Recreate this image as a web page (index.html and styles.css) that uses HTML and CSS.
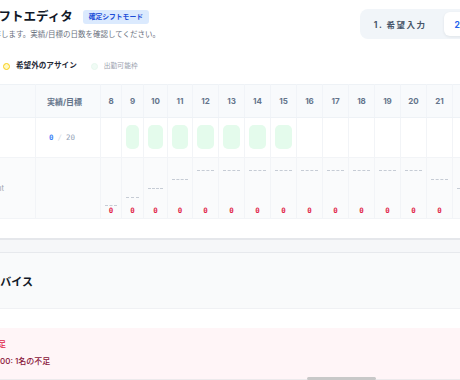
FILE: index.html
```html
<!DOCTYPE html>
<html lang="ja">
<head>
  <meta charset="UTF-8">
  <meta name="viewport" content="width=device-width, initial-scale=1.0">
  <title>シフトエディタ</title>
  <link rel="stylesheet" href="styles.css">
</head>
<body>
  <div class="page">
    <section class="editor">
      <div class="editor-head">
        <div class="title-block">
          <div class="title-row">
            <h1>シフトエディタ</h1>
            <span class="badge">確定シフトモード</span>
          </div>
          <p class="subtitle">保存します。実績/目標の日数を確認してください。</p>
        </div>
        <div class="steps">
          <button class="step">1. 希望入力</button>
          <button class="step active">2. 確定シフト</button>
        </div>
      </div>

      <div class="legend">
        <span class="legend-item"><span class="dot dot-warn"></span>希望外のアサイン</span>
        <span class="legend-item muted"><span class="dot dot-ok"></span>出勤可能枠</span>
      </div>

      <div class="grid-wrap">
        <table class="shift-table">
          <colgroup>
            <col style="width:75px">
            <col style="width:65px">
            <col style="width:21px">
            <col style="width:22px">
            <col style="width:24px">
            <col style="width:25px">
            <col span="13" style="width:26px">
          </colgroup>
          <thead>
            <tr>
              <th></th>
              <th class="count-head">実績/目標</th>
              <th>8</th><th>9</th><th>10</th><th>11</th><th>12</th><th>13</th><th>14</th>
              <th>15</th><th>16</th><th>17</th><th>18</th><th>19</th><th>20</th><th>21</th>
              <th>22</th><th>23</th><th>24</th>
            </tr>
          </thead>
          <tbody>
            <tr class="staff">
              <td class="name">山田 花子</td>
              <td class="count"><b>0</b><span class="sep">/</span><span class="goal">20</span></td>
              <td></td>
              <td><div class="pill"></div></td>
              <td><div class="pill"></div></td>
              <td><div class="pill"></div></td>
              <td><div class="pill"></div></td>
              <td><div class="pill"></div></td>
              <td><div class="pill"></div></td>
              <td><div class="pill"></div></td>
              <td></td><td></td><td></td><td></td><td></td><td></td><td></td><td></td><td></td>
            </tr>
            <tr class="summary">
              <td class="label">Headcount</td>
              <td></td>
              <td><div class="bar"><div class="need" style="height:0px"></div><span class="zero">0</span></div></td>
              <td><div class="bar"><div class="need" style="height:9px"></div><span class="zero">0</span></div></td>
              <td><div class="bar"><div class="need" style="height:18px"></div><span class="zero">0</span></div></td>
              <td><div class="bar"><div class="need" style="height:27px"></div><span class="zero">0</span></div></td>
              <td><div class="bar"><div class="need" style="height:36px"></div><span class="zero">0</span></div></td>
              <td><div class="bar"><div class="need" style="height:36px"></div><span class="zero">0</span></div></td>
              <td><div class="bar"><div class="need" style="height:36px"></div><span class="zero">0</span></div></td>
              <td><div class="bar"><div class="need" style="height:36px"></div><span class="zero">0</span></div></td>
              <td><div class="bar"><div class="need" style="height:36px"></div><span class="zero">0</span></div></td>
              <td><div class="bar"><div class="need" style="height:36px"></div><span class="zero">0</span></div></td>
              <td><div class="bar"><div class="need" style="height:36px"></div><span class="zero">0</span></div></td>
              <td><div class="bar"><div class="need" style="height:36px"></div><span class="zero">0</span></div></td>
              <td><div class="bar"><div class="need" style="height:36px"></div><span class="zero">0</span></div></td>
              <td><div class="bar"><div class="need" style="height:27px"></div><span class="zero">0</span></div></td>
              <td><div class="bar"><div class="need" style="height:18px"></div><span class="zero">0</span></div></td>
              <td><div class="bar"><div class="need" style="height:9px"></div><span class="zero">0</span></div></td>
              <td><div class="bar"><div class="need" style="height:0px"></div><span class="zero">0</span></div></td>
            </tr>
          </tbody>
        </table>
      </div>
    </section>

    <section class="advice">
      <div class="advice-head">
        <h2>AIアドバイス</h2>
      </div>
      <div class="advice-body">
        <div class="alert">
          <div class="alert-title">人員不足</div>
          <div class="alert-item">9/8 10:00: 1名の不足</div>
        </div>
      </div>
    </section>
  </div>
  <div class="scroll-thumb"></div>
</body>
</html>
```

FILE: styles.css
```css
* {
  box-sizing: border-box;
}

body {
  margin: 0;
  overflow: hidden;
  background-color: #f6f7f9;
  font-family: Inter, "Noto Sans CJK JP", sans-serif;
  color: #111827;
}

.page {
  width: 640px;
  margin-left: -40px;
}

/* editor card */
.editor {
  background: #fff;
  border-bottom: 2px solid #e5e7eb;
  padding-bottom: 19px;
}

.editor-head {
  display: flex;
  justify-content: space-between;
  align-items: flex-start;
  padding: 9px 64px 0 26px;
}

.title-row {
  display: flex;
  align-items: center;
  gap: 10px;
  height: 16px;
}

.title-row h1 {
  margin: 0;
  font-size: 12.5px;
  font-weight: 700;
  line-height: 16px;
}

.badge {
  font-size: 6.8px;
  font-weight: 700;
  color: #1d4ed8;
  background-color: #dbeafe;
  padding: 0 6px;
  line-height: 14px;
  border-radius: 3px;
}

.subtitle {
  margin: 4px 0 0;
  font-size: 7.5px;
  line-height: 11px;
  color: #6b7280;
}

.steps {
  display: flex;
  gap: 3px;
  padding: 3px;
  background-color: #f1f5f9;
  border-radius: 8px;
}

.step {
  border: none;
  background: none;
  font-family: inherit;
  font-size: 8.5px;
  font-weight: 700;
  letter-spacing: 1.5px;
  color: #475569;
  padding: 0 14px 0 11px;
  height: 24px;
  border-radius: 6px;
}

.step.active {
  background-color: #fff;
  color: #2563eb;
  box-shadow: 0 1px 3px rgba(15, 23, 42, 0.08);
}

/* legend */
.legend {
  display: flex;
  align-items: center;
  gap: 14px;
  margin: 21px 0 13px;
  padding-left: 43px;
  line-height: 10px;
}

.legend-item {
  display: flex;
  align-items: center;
  gap: 6px;
  font-size: 7.6px;
  font-weight: 700;
  color: #1f2937;
}

.legend-item.muted {
  font-size: 6.8px;
  font-weight: 400;
  color: #9ca3af;
}

.dot {
  width: 7px;
  height: 7px;
  border-radius: 50%;
  border: 1px solid;
}

.dot-warn {
  border-color: #facc15;
  background-color: #fef9c3;
}

.dot-ok {
  border-color: #e7f8ee;
  background-color: #f0fbf5;
}

/* table */
.grid-wrap {
  overflow: hidden;
}

.shift-table {
  border-collapse: collapse;
  table-layout: fixed;
  width: 564px;
  border-top: 1px solid #eef2f6;
}

.shift-table th {
  height: 33px;
  background-color: #f8fafc;
  font-size: 8px;
  font-weight: 700;
  color: #64748b;
  text-align: center;
  padding: 0;
  border-right: 1px solid #f1f4f8;
  border-bottom: 1px solid #eef2f6;
}

.shift-table th.count-head {
  padding-right: 7px;
}

.shift-table td {
  padding: 0;
  border: 1px solid #f2f4f7;
}

.staff td {
  height: 40px;
  background-color: #fff;
}

.name {
  font-size: 8px;
  color: #fff;
}

.staff .count {
  text-align: center;
  padding-right: 12px;
  font-family: "DejaVu Sans Mono", monospace;
  font-size: 7.5px;
  color: #94a3b8;
}

.count b {
  color: #3b82f6;
}

.sep {
  color: #d5dbe3;
  margin: 0 4px;
}

.pill {
  height: 24px;
  margin: -2px 4px 0;
  background-color: #e4fbec;
  border-radius: 5px;
}

.summary td {
  height: 61px;
  background-color: #fafbfc;
  vertical-align: bottom;
  padding-bottom: 3px;
}

.summary .label {
  vertical-align: middle;
  padding: 0 0 0 4px;
  font-size: 7.5px;
  color: #9ca3af;
}

.bar {
  display: flex;
  flex-direction: column;
  align-items: center;
}

.need {
  width: calc(100% - 8px);
  border-top: 1px dashed #c6ccd5;
  margin-bottom: 1px;
}

.zero {
  font-family: "DejaVu Sans Mono", monospace;
  font-size: 7.5px;
  font-weight: 700;
  line-height: 8px;
  color: #e11d48;
}

/* advice card */
.advice {
  margin-top: 12px;
  background-color: #fff;
  border-top: 1px solid #e7e9ed;
}

.advice-head {
  display: flex;
  align-items: center;
  height: 56px;
  padding-left: 7px;
  background-color: #f9fafb;
  border-bottom: 1px solid #f0f1f4;
}

.advice-head h2 {
  margin: 0;
  font-size: 11px;
  font-weight: 700;
}

.advice-body {
  padding-top: 19px;
}

.alert {
  background-color: #fff5f7;
  padding: 10px 14px 12px;
  border-bottom: 1px solid #eceaec;
}

.alert-title {
  font-size: 8px;
  font-weight: 500;
  line-height: 12px;
  color: #e11d48;
}

.alert-item {
  margin-top: 5px;
  font-size: 8px;
  font-weight: 500;
  line-height: 12px;
  color: #881337;
}

.scroll-thumb {
  position: fixed;
  left: 307px;
  bottom: 0;
  width: 69px;
  height: 3px;
  border-radius: 2px;
  background-color: #c8c8c8;
}
```
